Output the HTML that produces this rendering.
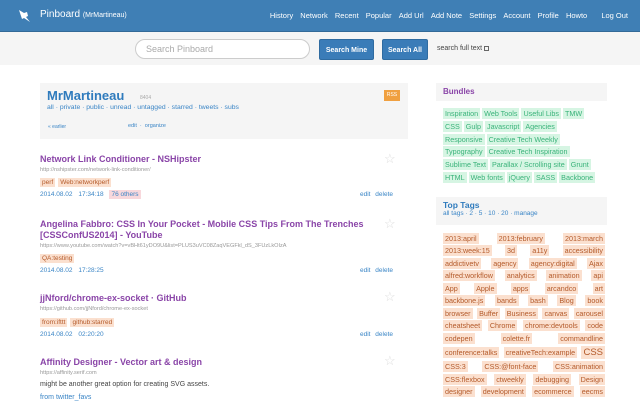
<!DOCTYPE html>
<html><head><meta charset="utf-8"><style>
*{margin:0;padding:0;box-sizing:border-box}
body{width:640px;height:400px;overflow:hidden;background:#fff;font-family:"Liberation Sans",sans-serif;position:relative;color:#333}
.hdr{position:absolute;left:0;top:0;width:640px;height:32px;background:#3f7fb5;border-bottom:1px solid #336a98}
.logo{position:absolute;left:40px;top:9px;color:#fff;font-size:10px}
.logo small{font-size:7px}
.nav{position:absolute;right:12px;top:11px;color:#fff;font-size:7.5px;word-spacing:0}
.nav span{margin-left:5px}
.sb{position:absolute;left:0;top:32px;width:640px;height:33px;background:#f5f5f5}
.inp{position:absolute;left:135px;top:39px;width:175px;height:20px;border:1px solid #ccc;border-radius:10px;background:#fff;color:#aaa;font-size:9px;padding:4px 10px}
.btn{position:absolute;top:39px;height:21px;background:#3a7cb8;color:#fff;font-size:7px;font-weight:bold;border-radius:2px;text-align:center;line-height:21px;border:1px solid #2f6ba0}
.pbox{position:absolute;left:40px;top:83px;width:368px;height:56px;background:#f5f5f5}
.t{position:absolute;left:40px;font-size:9px;font-weight:bold;color:#8a45a8}
.u{position:absolute;left:40px;font-size:5.6px;color:#999}
.tg{position:absolute;left:40px;font-size:6.5px}
.tg span{background:#fbe0cf;color:#b45a2a;padding:1px 2px;margin-right:3px}
.d{position:absolute;left:40px;font-size:6.5px;color:#3a85c6;word-spacing:4px}
.ed{position:absolute;left:360px;font-size:6.5px;color:#3a85c6;word-spacing:3px}
.star{position:absolute;left:384px;font-size:13px;color:#ddd}
.side{position:absolute;left:436px;width:171px}
.sh{background:#f5f5f5;padding:4px 7px}
.bun{padding:7px 7px 0;font-size:7.2px;line-height:12.8px;white-space:nowrap}
.bun span{background:#d6f5e3;color:#3ab37a;padding:1px 2px;margin-right:0}
.row{display:flex;justify-content:space-between;font-size:7.2px;height:12.5px;align-items:center;color:#b45a2a;white-space:nowrap}
.row span{background:#fbe0cf;padding:1px 2px}
</style></head><body>
<div class="hdr">
<svg style="position:absolute;left:16px;top:8px" width="16" height="16" viewBox="0 0 16 16"><path d="M3 2 L8 5 L11 4 L12 8 L10 9 L14 14 L8 10 L6 11 L5 8 Z" fill="#fff"/></svg>
<div class="logo">Pinboard <small>(MrMartineau)</small></div>
<div class="nav">History <span>Network</span> <span>Recent</span> <span>Popular</span> <span>Add Url</span> <span>Add Note</span> <span>Settings</span> <span>Account</span> <span>Profile</span> <span>Howto</span> <span style="margin-left:12px">Log Out</span></div>
</div>
<div class="sb"></div>
<div class="inp">Search Pinboard</div>
<div class="btn" style="left:319px;width:55px">Search Mine</div>
<div class="btn" style="left:382px;width:46px">Search All</div>
<div style="position:absolute;left:437px;top:45px;font-size:7px;color:#444">search full text <span style="display:inline-block;width:5px;height:5px;border:1px solid #666;vertical-align:middle"></span></div>

<div class="pbox"></div>
<div style="position:absolute;left:47px;top:88px;font-size:13px;font-weight:bold;color:#2f7bbd">MrMartineau</div>
<div style="position:absolute;left:140px;top:95px;font-size:5px;color:#aaa">8404</div>
<div style="position:absolute;left:384px;top:90px;width:16px;height:11px;background:#f0a040;color:#fff;font-size:5px;text-align:center;line-height:11px">RSS</div>
<div style="position:absolute;left:47px;top:104px;font-size:6.8px;color:#3a85c6">all · private · public · unread · untagged · starred · tweets · subs</div>
<div style="position:absolute;left:48px;top:124px;font-size:5px;color:#3a85c6">« earlier</div>
<div style="position:absolute;left:128px;top:123px;font-size:5.5px;color:#3a85c6">edit &nbsp;· &nbsp;organize</div>

<div class="t" style="top:154px">Network Link Conditioner - NSHipster</div>
<div class="u" style="top:167px">http://nshipster.com/network-link-conditioner/</div>
<div class="tg" style="top:179px"><span>perf</span><span>Web:networkperf</span></div>
<div class="d" style="top:191px">2014.08.02 17:34:18 <span style="background:#f8d8dc;padding:1px 2px;word-spacing:0">76 others</span></div>
<div class="ed" style="top:191px">edit delete</div>
<div class="star" style="top:151px">☆</div>

<div class="t" style="top:219px;line-height:11px">Angelina Fabbro: CSS In Your Pocket - Mobile CSS Tips From The Trenches<br>[CSSConfUS2014] - YouTube</div>
<div class="u" style="top:243px">https://www.youtube.com/watch?v=vBHt61yDO9U&amp;list=PLUS3uVC08ZaqVEGFkl_dS_3FUzLkOIzA</div>
<div class="tg" style="top:255px"><span>QA:testing</span></div>
<div class="d" style="top:267px">2014.08.02 17:28:25</div>
<div class="ed" style="top:267px">edit delete</div>
<div class="star" style="top:216px">☆</div>

<div class="t" style="top:293px">jjNford/chrome-ex-socket · GitHub</div>
<div class="u" style="top:306px">https://github.com/jjNford/chrome-ex-socket</div>
<div class="tg" style="top:319px"><span>from:ifttt</span><span>github:starred</span></div>
<div class="d" style="top:331px">2014.08.02 02:20:20</div>
<div class="ed" style="top:331px">edit delete</div>
<div class="star" style="top:289px">☆</div>

<div class="t" style="top:357px">Affinity Designer - Vector art &amp; design</div>
<div class="u" style="top:370px">https://affinity.serif.com</div>
<div style="position:absolute;left:40px;top:381px;font-size:7px;color:#444">might be another great option for creating SVG assets.</div>
<div style="position:absolute;left:40px;top:394px;font-size:7px;color:#3a85c6">from twitter_favs</div>
<div class="star" style="top:353px">☆</div>

<div class="side" style="top:83px">
<div class="sh" style="height:18px;font-size:8px;font-weight:bold;color:#8a45a8">Bundles</div>
<div class="bun"><span>Inspiration</span> <span>Web Tools</span> <span>Useful Libs</span> <span>TMW</span><br><span>CSS</span> <span>Gulp</span> <span>Javascript</span> <span>Agencies</span><br><span>Responsive</span> <span>Creative Tech Weekly</span><br><span>Typography</span> <span>Creative Tech Inspiration</span><br><span>Sublime Text</span> <span>Parallax / Scrolling site</span> <span>Grunt</span><br><span>HTML</span> <span>Web fonts</span> <span>jQuery</span> <span>SASS</span> <span>Backbone</span></div>
</div>
<div class="side" style="top:197px">
<div class="sh" style="height:28px;padding-top:3px"><div style="font-size:8.5px;font-weight:bold;color:#2f7bbd">Top Tags</div><div style="font-size:6.5px;color:#3a85c6">all tags · 2 · 5 · 10 · 20 · manage</div></div>
<div style="padding:7px 2px 0 7px">
<div class="row"><span>2013:april</span><span>2013:february</span><span>2013:march</span></div>
<div class="row"><span>2013:week:15</span><span>3d</span><span>a11y</span><span>accessibility</span></div>
<div class="row"><span>addictivetv</span><span>agency</span><span>agency:digital</span><span>Ajax</span></div>
<div class="row"><span>alfred:workflow</span><span>analytics</span><span>animation</span><span>api</span></div>
<div class="row"><span>App</span><span>Apple</span><span>apps</span><span>arcandco</span><span>art</span></div>
<div class="row"><span>backbone.js</span><span>bands</span><span>bash</span><span>Blog</span><span>book</span></div>
<div class="row"><span>browser</span><span>Buffer</span><span>Business</span><span>canvas</span><span>carousel</span></div>
<div class="row"><span>cheatsheet</span><span>Chrome</span><span>chrome:devtools</span><span>code</span></div>
<div class="row"><span>codepen</span><span>colette.fr</span><span>commandline</span></div>
<div class="row" style="height:16px"><span>conference:talks</span><span>creativeTech:example</span><span style="font-size:9.5px">CSS</span></div>
<div class="row"><span>CSS:3</span><span>CSS:@font-face</span><span>CSS:animation</span></div>
<div class="row"><span>CSS:flexbox</span><span>ctweekly</span><span>debugging</span><span>Design</span></div>
<div class="row"><span>designer</span><span>development</span><span>ecommerce</span><span>eecms</span></div>
</div>
</div>
</body></html>
